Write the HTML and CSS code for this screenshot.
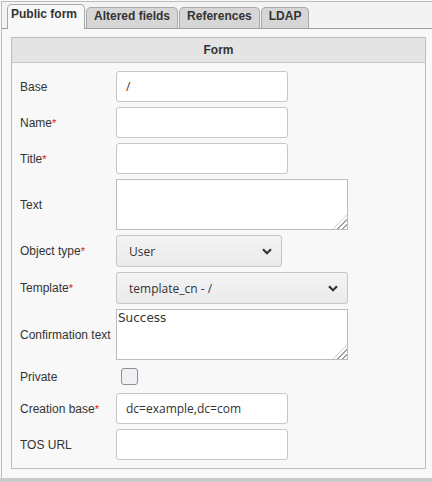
FILE: index.html
```html
<!DOCTYPE html>
<html>
<head>
    <link rel="stylesheet" href="styles.css">
</head>
<body>
    <div class="panel">
        <ul class="tabs">
            <li class="tab active">Public form</li>
            <li class="tab">Altered fields</li>
            <li class="tab">References</li>
            <li class="tab">LDAP</li>
        </ul>
        <div class="tab-body">
            <div class="form-box">
                <div class="form-head">Form</div>
                <div class="form-grid">
                    <label class="field-label">Base</label>
                    <input class="text-input" type="text" value="/">

                    <label class="field-label">Name<span class="req">*</span></label>
                    <input class="text-input" type="text">

                    <label class="field-label">Title<span class="req">*</span></label>
                    <input class="text-input" type="text">

                    <label class="field-label">Text</label>
                    <div class="area-wrap">
                        <textarea class="text-area"></textarea>
                        <span class="grip"></span>
                    </div>

                    <label class="field-label">Object type<span class="req">*</span></label>
                    <div class="select-wrap short">
                        <select class="select"><option>User</option></select>
                        <svg class="chevron" width="10" height="7" viewBox="0 0 10 7"><polyline points="1,1.2 5,5.2 9,1.2" fill="none" stroke="#333" stroke-width="2.2"/></svg>
                    </div>

                    <label class="field-label">Template<span class="req">*</span></label>
                    <div class="select-wrap">
                        <select class="select"><option>template_cn - /</option></select>
                        <svg class="chevron" width="10" height="7" viewBox="0 0 10 7"><polyline points="1,1.2 5,5.2 9,1.2" fill="none" stroke="#333" stroke-width="2.2"/></svg>
                    </div>

                    <label class="field-label">Confirmation text</label>
                    <div class="area-wrap">
                        <textarea class="text-area">Success</textarea>
                        <span class="grip"></span>
                    </div>

                    <label class="field-label">Private</label>
                    <div class="check-cell"><input class="check" type="checkbox"></div>

                    <label class="field-label">Creation base<span class="req">*</span></label>
                    <input class="text-input" type="text" value="dc=example,dc=com">

                    <label class="field-label">TOS URL</label>
                    <input class="text-input" type="text">
                </div>
            </div>
        </div>
    </div>
    <div class="footer-band"></div>
</body>
</html>
```

FILE: styles.css
```css
body {
    margin: 0;
    background: #f8f8f8;
    font-family: "Liberation Sans", Arial, sans-serif;
    font-size: 12px;
    color: #333;
    overflow: hidden;
}

.panel {
    margin: 1px 0 0 1px;
    border-top: 1px solid #bcbcbc;
    border-left: 1px solid #bcbcbc;
}

.tabs {
    display: flex;
    align-items: flex-end;
    height: 26px;
    margin: 0;
    padding: 0 0 0 5px;
    list-style: none;
    background: #f2f3f2;
    border-bottom: 1px solid #9c9c9c;
}

.tab {
    height: 15px;
    margin-right: 1px;
    padding: 1px 7px 4px;
    line-height: 14px;
    font-weight: bold;
    background: #d6d6d6;
    border: 1px solid #a8a8a8;
    border-bottom: none;
    border-radius: 5px 5px 0 0;
}

.tab.active {
    position: relative;
    height: 22px;
    margin-bottom: -1px;
    padding: 2px 7px 0 3px;
    background: #f8f8f8;
}

.tab-body {
    padding: 8px 6px 9px 9px;
    background: #f8f8f8;
}

.form-box {
    border: 1px solid #bdbdbd;
}

.form-head {
    height: 24px;
    line-height: 24px;
    text-align: center;
    font-weight: bold;
    background: #e4e4e4;
    border-bottom: 1px solid #c6c6c6;
}

.form-grid {
    display: grid;
    grid-template-columns: 96px 1fr;
    row-gap: 5px;
    align-items: center;
    padding: 8px 8px 8px 8px;
}

.req {
    color: #e01010;
    font-size: 11px;
}

.text-input {
    box-sizing: border-box;
    width: 172px;
    height: 31px;
    margin: 0;
    padding: 0 9px;
    font-family: "Open Sans", sans-serif;
    font-size: 12px;
    color: #333;
    background: #fff;
    border: 1px solid #c6c6c6;
    border-radius: 3px;
    outline: none;
}

.area-wrap {
    position: relative;
    width: 232px;
    height: 51px;
}

.text-area {
    box-sizing: border-box;
    display: block;
    width: 232px;
    height: 51px;
    margin: 0;
    padding: 1px 1px;
    font-family: "DejaVu Sans", sans-serif;
    font-size: 12px;
    color: #333;
    background: #fff;
    border: 1px solid #bcbcbc;
    border-radius: 0;
    resize: none;
    outline: none;
}

.grip {
    position: absolute;
    right: 1px;
    bottom: 1px;
    width: 14px;
    height: 14px;
    background: repeating-linear-gradient(135deg, #fff 0 2px, #a0a0a0 2px 3.5px);
    clip-path: polygon(100% 0, 100% 100%, 0 100%);
}

.select-wrap {
    position: relative;
    width: 232px;
    height: 32px;
}

.select-wrap.short {
    width: 166px;
}

.select {
    box-sizing: border-box;
    width: 100%;
    height: 32px;
    margin: 0;
    padding: 0 12px;
    font-family: "Open Sans", sans-serif;
    font-size: 12px;
    color: #333;
    background: linear-gradient(#f4f4f4, #eaeaea);
    border: 1px solid #c6c6c6;
    border-radius: 3px;
    appearance: none;
    outline: none;
}

.chevron {
    position: absolute;
    right: 10px;
    top: 13px;
}

.check-cell {
    height: 23px;
    display: flex;
    align-items: center;
}

.check {
    box-sizing: border-box;
    width: 17px;
    height: 17px;
    margin: 0 0 0 5px;
    background: #eef0f3;
    border: 1px solid #8f8f8f;
    border-radius: 3px;
    appearance: none;
}

.footer-band {
    height: 10px;
    background: #cacaca;
}
```
